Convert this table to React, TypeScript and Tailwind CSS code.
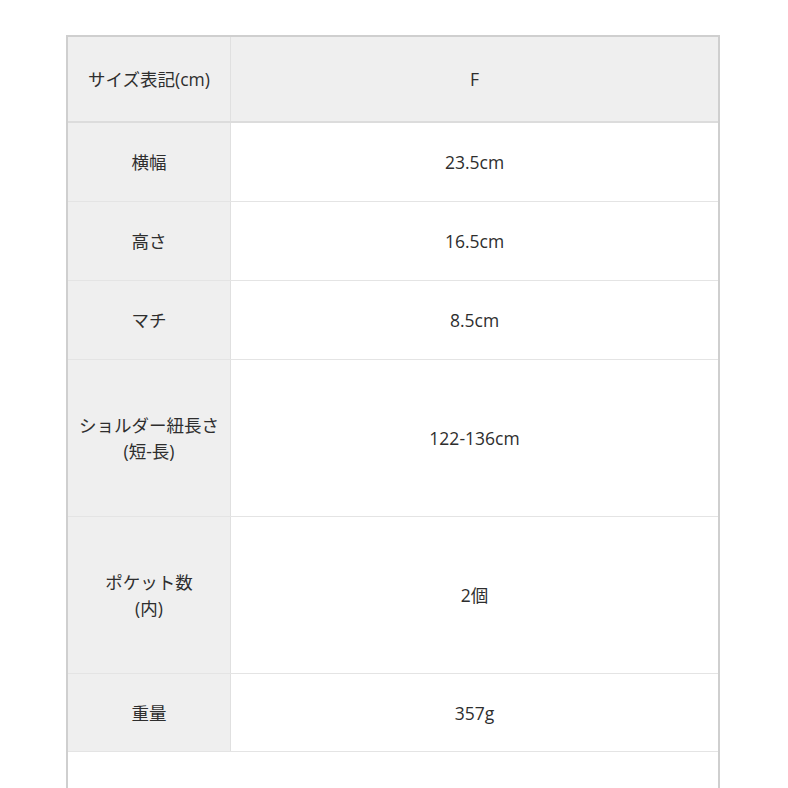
import React from 'react';

const rows: { label: string[]; value: string; h: string }[] = [
  { label: ['横幅'], value: '23.5cm', h: 'h-[79px]' },
  { label: ['高さ'], value: '16.5cm', h: 'h-[79px]' },
  { label: ['マチ'], value: '8.5cm', h: 'h-[79px]' },
  { label: ['ショルダー紐長さ', '(短-長)'], value: '122-136cm', h: 'h-[157px]' },
  { label: ['ポケット数', '(内)'], value: '2個', h: 'h-[157px]' },
  { label: ['重量'], value: '357g', h: 'h-[78px]' },
];

export default function App() {
  return (
    <div
      className="w-[788px] h-[788px] overflow-hidden bg-white text-[#2e2e2e] text-[17.5px] leading-[26px]"
      style={{ fontFamily: '"Open Sans", "Noto Sans CJK JP", sans-serif' }}
    >
      <div className="ml-[66px] mt-[35px] w-[654px] border-x-2 border-t-2 border-[#cfcfcf]">
        <div className="flex h-[86px] bg-[#efefef] border-b-2 border-[#dcdcdc]">
          <div className="w-[163px] flex items-center justify-center border-r border-[#e0e0e0]">
            サイズ表記(cm)
          </div>
          <div className="flex-1 flex items-center justify-center">F</div>
        </div>
        {rows.map((r) => (
          <div key={r.value} className={`flex ${r.h} border-b border-[#e4e4e4]`}>
            <div className="w-[163px] bg-[#efefef] flex flex-col items-center justify-center border-r border-[#e0e0e0]">
              {r.label.map((l) => (
                <span key={l}>{l}</span>
              ))}
            </div>
            <div className="flex-1 flex items-center justify-center">{r.value}</div>
          </div>
        ))}
        <div className="h-[60px] bg-white" />
      </div>
    </div>
  );
}
